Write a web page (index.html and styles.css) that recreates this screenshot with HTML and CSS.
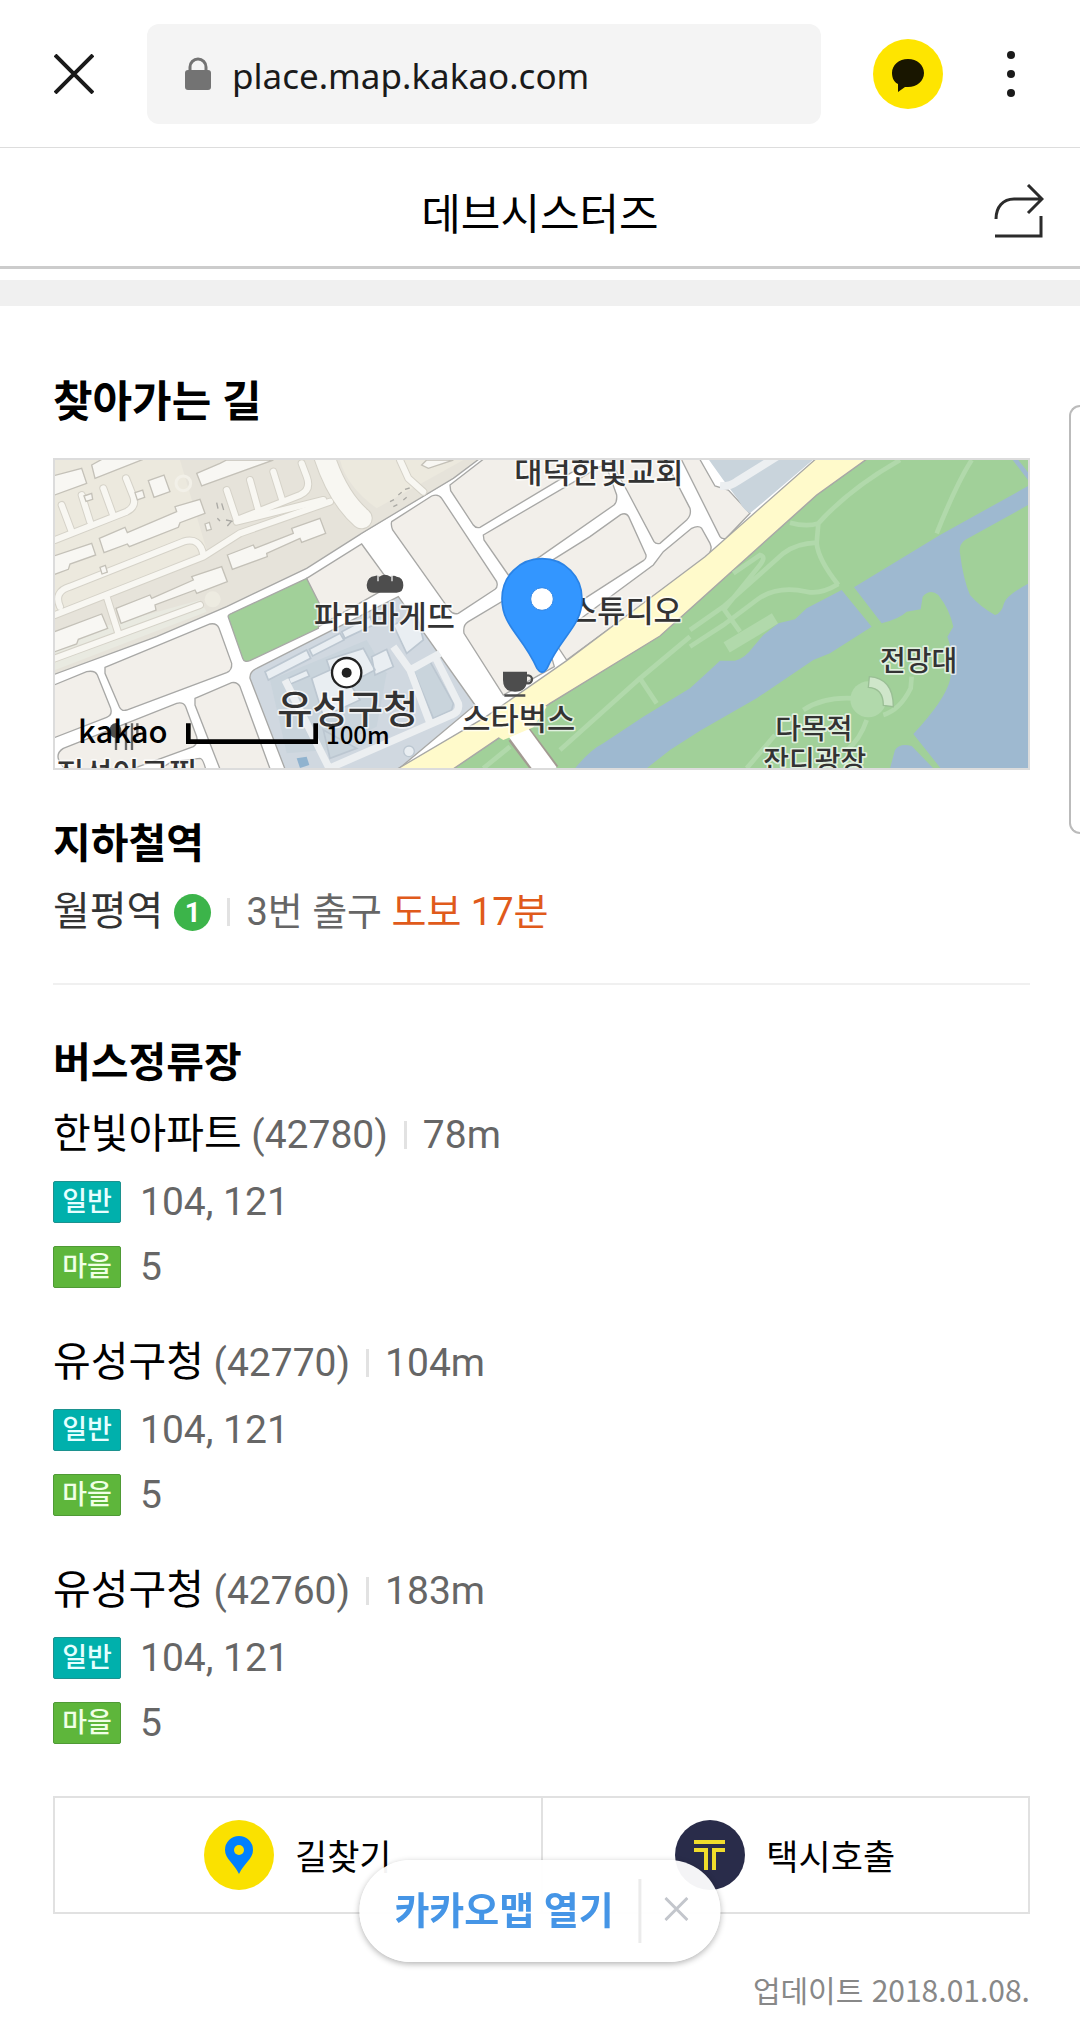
FILE: index.html
```html
<!DOCTYPE html>
<html lang="ko">
<head>
    <meta charset="UTF-8">
    <meta name="viewport" content="width=device-width, initial-scale=1.0">
    <title>데브시스터즈</title>
    <link rel="stylesheet" href="styles.css">
</head>
<body>
    <!-- Browser bar -->
    <div class="browser-bar">
        <button class="icon-button close-button" aria-label="닫기">
            <svg width="40" height="40" viewBox="0 0 40 40"><path d="M1 1L39 39M39 1L1 39" fill="none" stroke="#1a1a1a" stroke-width="4"/></svg>
        </button>
        <label class="address">
            <svg width="26" height="34" viewBox="0 0 26 34"><path d="M5 14V10a8 8 0 0 1 16 0v4" fill="none" stroke="#737373" stroke-width="3"/><rect x="0" y="13" width="26" height="20" rx="3" fill="#737373"/></svg>
            <input type="text" class="address-input" value="place.map.kakao.com" aria-label="주소" readonly>
        </label>
        <button class="icon-button talk-button" aria-label="카카오톡 공유">
            <svg width="70" height="70" viewBox="0 0 70 70"><circle cx="35" cy="35" r="35" fill="#fee500"/><path d="M35 20c9 0 16 6 16 14s-7 14-16 14h-3l-7 5v-8c-4-2-6-6-6-11 0-8 7-14 16-14z" fill="#191600"/></svg>
        </button>
        <button class="icon-button more-button" aria-label="더보기">
            <svg width="10" height="48" viewBox="0 0 10 48"><g fill="#1a1a1a"><circle cx="5" cy="5" r="4"/><circle cx="5" cy="24" r="4"/><circle cx="5" cy="43" r="4"/></g></svg>
        </button>
    </div>

    <header class="place-header">
        <h1>데브시스터즈</h1>
        <button class="icon-button share-button" aria-label="공유">
            <svg width="50" height="54" viewBox="0 0 50 54"><path d="M2 35C2 23 9 15 20 15H47M34 1L48 15L34 29M1 52H47V32" fill="none" stroke="#2b2b2b" stroke-width="3"/></svg>
        </button>
    </header>
    <div class="section-gap"></div>

    <main class="content">
        <h2 class="section-title">찾아가는 길</h2>

        <div class="map">
            <svg viewBox="45 60 2919 924" preserveAspectRatio="xMidYMid slice" role="img" aria-label="지도">
                <rect x="45" y="60" width="2950" height="924" fill="#fff"/>

                <!-- Apartment complex -->
                <path class="edge" fill="#e6e3da" d="M30 708L350 590L560 500L800 385L965 280L1240 115L1340 40H30Z"/>
                <path fill="#ece9de" d="M45 60H420L500 330L45 520ZM900 60H1270L1010 205Q920 140 900 60Z"/>
                <path fill="#e9eae1" d="M45 600L480 480L500 515L45 690Z"/>
                <g class="lane-edge">
                    <path class="lane-edge-wide" d="M850 40Q890 170 965 235"/>
                    <path d="M45 300L260 215Q290 200 280 170L258 115M190 145L218 222M125 165L150 245M65 195L95 275"/>
                    <path d="M560 150L590 240L780 165Q815 150 800 110L785 70M700 95L728 185M630 120L655 210M590 245L850 180"/>
                    <path d="M45 525L490 350L600 280L870 185M60 500Q40 455 90 440L430 305Q480 290 490 345M200 470L235 580M45 655L480 495"/>
                    <path d="M1080 60L1105 115L1150 155"/>
                </g>
                <g class="lane">
                    <path class="lane-wide" d="M850 40Q890 170 965 235"/>
                    <path d="M45 300L260 215Q290 200 280 170L258 115M190 145L218 222M125 165L150 245M65 195L95 275"/>
                    <path d="M560 150L590 240L780 165Q815 150 800 110L785 70M700 95L728 185M630 120L655 210M590 245L850 180"/>
                    <path d="M45 525L490 350L600 280L870 185M60 500Q40 455 90 440L430 305Q480 290 490 345M200 470L235 580M45 655L480 495"/>
                    <path d="M1080 60L1105 115L1150 155"/>
                </g>
                <g class="building">
                    <path d="M30 110L125 85L140 130L30 170ZM155 75L200 50H330L165 115ZM325 122L372 105L390 155L342 172ZM470 100L540 70L560 60H700L485 138Z"/>
                    <path d="M178 295L255 262L262 278L410 215L405 200L480 178L495 220L420 248L415 262L268 320L262 312L192 338Z"/>
                    <path d="M30 352L155 310L167 345L90 372L85 388L30 408ZM180 382L196 376L202 396L186 402ZM495 252L508 247L514 268L500 272ZM285 158L308 150L314 172L292 180ZM132 168L155 160L158 178L138 184Z"/>
                    <path d="M562 345L640 315L645 325L760 280L755 265L840 235L857 280L785 307L780 295L680 340L682 350L577 388Z"/>
                    <path d="M228 505L330 465L335 475L460 420L455 410L545 380L562 425L470 460L465 450L345 495L348 510L243 550Z"/>
                    <path d="M30 580L185 522L203 565L115 598L110 612L30 640ZM1145 75L1160 60H1240L1165 85Z"/>
                </g>
                <g class="dash">
                    <path d="M530 188l4 18M545 190l6 20M532 235l8 8M558 240l20 4M562 258l12-14M1050 185l12-6M1075 165l10-8M1095 148l14-4M1060 200l12-6M1090 180l10-8"/>
                </g>
                <g fill="none" stroke="#f2f0e8" stroke-width="9"><circle cx="430" cy="130" r="22"/></g>
                <circle cx="518" cy="478" r="24" fill="#edebe1"/>
                <!-- Street between the complex and the blocks -->
                <path d="M965 292L1255 118" fill="none" stroke="#fff" stroke-width="14"/>

                <!-- City blocks, west -->
                <g class="block edge">
                    <path d="M800 415L965 312L1035 408Q1050 440 1020 455L835 560Z"/>
                    <path d="M195 682L510 552Q530 548 537 565L575 670Q577 690 560 698L260 810Q245 815 238 800L195 700Z"/>
                    <path d="M30 740L140 695Q165 690 172 705L212 805Q218 825 200 832L30 898Z"/>
                    <path d="M70 925L410 790Q430 785 437 800L470 890Q475 910 460 920L240 1000H90Q30 950 70 925Z"/>
                    <path d="M465 775L575 728Q592 725 600 740L695 1000H545L465 795Z"/>
                    <path d="M340 1000L395 965L480 955Q490 955 500 1000Z"/>
                </g>
                <path class="edge" fill="#a1d099" d="M565 532Q562 525 575 520L800 415L838 490L835 565L630 662Q612 668 608 655Z"/>

                <!-- District office grounds -->
                <path class="edge" fill="#d0d8e0" d="M650 685L1075 470L1305 795L1060 1000H740L630 715Q628 695 650 685Z"/>
                <path fill="#c9d4dc" d="M690 720L980 600L1040 700L1010 860L860 930L740 940Z"/>
                <g fill="#e9eef2" stroke="#bcc7d1" stroke-width="5">
                    <path d="M675 695L800 630L812 655L685 720ZM808 628L900 580L912 600L818 648ZM905 575L990 530L1000 555L915 595ZM745 715L800 690L808 708L752 732Z"/>
                    <path d="M860 660L970 625L1005 690L930 730L960 780L850 830L815 715L870 690ZM995 650L1040 628L1060 680L1005 705ZM1060 555L1130 520L1150 600L1100 640Z"/>
                    <path fill="#c9d4dc" d="M1120 690L1170 665L1240 790L1235 810L1180 835ZM850 870L950 925L870 955Z"/>
                </g>
                <g fill="none" stroke="#eceff1" stroke-width="22">
                    <path d="M735 720L870 990M1060 620L1110 690L1200 640M1185 650L1255 790Q1260 815 1235 825L870 984M1110 690L1170 850"/>
                </g>
                <circle cx="1107" cy="934" r="16" fill="#e9eef2" stroke="#bcc7d1" stroke-width="4"/>
                <path fill="#90b3cf" d="M770 955L800 950L808 975L780 984Z"/>

                <!-- City blocks, east -->
                <g class="block edge" transform="translate(990 0)">
                    <path d="M65 245L185 168Q205 160 215 175L380 425Q385 440 375 448L265 520Q250 525 240 512L68 270Q62 255 65 245Z"/>
                    <path d="M240 135L350 50H690L600 100L330 262Q318 266 310 255L242 152Z"/>
                    <path d="M340 285L690 80Q705 75 715 95L740 165Q742 185 732 195L510 350L415 405L342 300Z"/>
                    <path d="M295 545L420 470L530 600L553 680L400 765L282 580Q278 555 295 545Z"/>
                    <path d="M420 440L660 290L752 224Q768 216 776 230L828 345Q830 355 820 362L640 478L480 560Z"/>
                    <path d="M550 600L640 530L850 375L880 335L965 265Q985 255 995 265L1020 310Q1030 330 1010 350L590 660Z"/>
                    <path d="M715 50L770 150L852 305Q858 313 870 310L950 240Q965 225 960 205L880 50Z"/>
                </g>
                <g transform="translate(1980 0)">
                    <path class="block edge" d="M-60 50L-5 50L45 138L85 150L150 220L78 295Q65 298 60 290Z"/>
                    <path fill="#c9d4dc" d="M20 50H350L150 220Q130 210 115 180L70 120Z"/>
                    <path d="M60 138Q90 140 110 125L230 50" fill="none" stroke="#eceff1" stroke-width="24"/>
                </g>

                <!-- Park, main road and river -->
                <g transform="translate(990 0)">
                    <path class="edge" fill="#a1d099" d="M230 1000L540 790L870 585L990 480L1340 165L1500 50H1990V1000Z"/>
                    <path class="edge" fill="#fffacb" d="M60 1000L345 832L590 662L1005 350L1345 50H1500L1340 165L990 480L870 588L540 790L230 1000Z"/>
                    <path fill="#9eb9d0" d="M615 985Q660 930 700 910L820 830L960 745L1020 690L1050 662H1095Q1125 655 1150 620L1180 585L1225 550L1275 538L1310 505L1415 450L1505 560L1380 640L1330 660L1160 775L990 872L900 930L830 985Z"/>
                    <path d="M445 880L535 1000" fill="none" stroke="#a39a92" stroke-width="74"/>
                    <path d="M425 850L535 1000" fill="none" stroke="#fff" stroke-width="62"/>
                    <path fill="#fffacb" d="M350 870L510 780L530 800L490 862L400 900Z"/>
                </g>
                <g transform="translate(1980 0)">
                    <path fill="#9eb9d0" d="M462 442L720 285L990 135V192L795 300Q775 315 780 340Q790 420 810 465Q840 500 885 525Q905 520 912 490Q920 465 990 428V985H722L640 882Q735 780 750 720Q765 650 742 590L760 560Q750 510 715 465Q690 445 668 470L662 508L620 515Q600 535 545 550Z"/>
                    <path fill="#9eb9d0" d="M570 985L585 930Q600 908 635 918L700 985ZM938 60H955L990 104V128Z"/>
                    <g class="trail">
                        <path d="M600 60Q450 145 355 250Q320 262 270 248M355 250L350 310Q355 360 415 435M350 308Q290 310 250 340L70 500L-30 570M415 432Q360 465 320 455Q230 435 170 480L70 555L-30 620M70 505L120 575M100 400L180 345Q200 350 180 375L75 505"/>
                        <path d="M815 60Q770 130 710 280"/>
                        <path class="trail-wide" d="M80 622L225 535"/>
                        <path d="M310 810Q370 770 460 775M500 840Q480 900 440 930M635 710L632 745Q600 810 550 825M225 885L140 985"/>
                        <path d="M-30 590L-180 715L-420 930M-180 715L-130 790M-570 920L-650 985"/>
                    </g>
                    <circle cx="505" cy="778" r="54" fill="#b1d9ab"/>
                    <path d="M508 710Q580 715 580 800L550 796Q550 745 505 742Z" fill="#cfe6ca" stroke="#9abf95" stroke-width="4"/>
                </g>

                <!-- Place labels -->
                <g class="map-label">
                    <text x="1423" y="129">대덕한빛교회</text>
                    <text x="822" y="563">파리바게뜨</text>
                    <text x="1587" y="547">스튜디오</text>
                    <text x="1267" y="870">스타벅스</text>
                    <text x="48" y="1034">진성아구찜</text>
                    <text x="712" y="850" class="map-label-large">유성구청</text>
                    <text x="2520" y="694" class="map-label-small">전망대</text>
                    <text x="2206" y="898" class="map-label-small">다목적</text>
                    <text x="2170" y="994" class="map-label-small">잔디광장</text>
                </g>
                <circle cx="920" cy="698" r="44" fill="#fff" stroke="#222" stroke-width="7"/>
                <circle cx="920" cy="698" r="15" fill="#222"/>
                <path fill="#4d4d4d" d="M980 435Q982 410 1005 408Q1012 404 1018 410Q1034 398 1052 410Q1062 404 1070 410Q1090 412 1090 436Q1090 458 1070 458H1000Q980 458 980 435Z"/>
                <path d="M1014 404V424M1056 404V424" stroke="#eee" stroke-width="4"/>
                <path fill="#4d4d4d" d="M1389 695H1461V720Q1461 755 1425 755Q1389 755 1389 720ZM1393 763H1456V770H1393Z"/>
                <circle cx="1464" cy="718" r="12" fill="none" stroke="#4d4d4d" stroke-width="7"/>
                <path d="M228 850V930M258 850V930M276 850V930M292 850V890" stroke="#666" stroke-width="7"/>
                <ellipse cx="226" cy="872" rx="18" ry="22" fill="#4d4d4d"/>

                <!-- Marker -->
                <g transform="translate(990 0)">
                    <path d="M516 356C584 356 636 409 636 476C636 560 575 585 531 685Q516 708 501 685C457 585 396 560 396 476C396 409 448 356 516 356Z" fill="#3396ff" stroke="#2a83e6" stroke-width="5"/>
                    <circle cx="516" cy="477" r="34" fill="#fff" stroke="#2a83e6" stroke-width="3"/>
                </g>

                <!-- Scale -->
                <text x="114" y="910" class="map-logo">kakao</text>
                <path d="M445 850V905H827V850" fill="none" stroke="#000" stroke-width="14"/>
                <text x="858" y="912" class="map-scale">100m</text>
            </svg>
        </div>

        <section class="subway">
            <h3 class="sub-title">지하철역</h3>
            <p class="subway-info">
                <span class="station">월평역</span>
                <span class="line-number">1</span>
                <span class="bar"></span>
                <span>3번 출구 <em class="walk">도보 17분</em></span>
            </p>
        </section>

        <section class="bus">
            <h3 class="sub-title">버스정류장</h3>
            <ul class="stop-list">
                <li class="stop">
                    <p class="stop-info"><span><strong class="stop-name">한빛아파트</strong> (42780)</span><span class="bar"></span><span>78m</span></p>
                    <p class="route"><span class="badge badge-city">일반</span>104, 121</p>
                    <p class="route"><span class="badge badge-village">마을</span>5</p>
                </li>
                <li class="stop">
                    <p class="stop-info"><span><strong class="stop-name">유성구청</strong> (42770)</span><span class="bar"></span><span>104m</span></p>
                    <p class="route"><span class="badge badge-city">일반</span>104, 121</p>
                    <p class="route"><span class="badge badge-village">마을</span>5</p>
                </li>
                <li class="stop">
                    <p class="stop-info"><span><strong class="stop-name">유성구청</strong> (42760)</span><span class="bar"></span><span>183m</span></p>
                    <p class="route"><span class="badge badge-city">일반</span>104, 121</p>
                    <p class="route"><span class="badge badge-village">마을</span>5</p>
                </li>
            </ul>
        </section>

        <div class="actions">
            <a href="#" class="action">
                <svg width="70" height="70" viewBox="0 0 70 70"><circle cx="35" cy="35" r="35" fill="#fae100"/><path d="M35 16a14 14 0 0 1 14 14c0 9-9 13-14 24c-5-11-14-15-14-24a14 14 0 0 1 14-14z" fill="#0080ff"/><circle cx="35" cy="30" r="5" fill="#fae100"/></svg>
                길찾기
            </a>
            <a href="#" class="action">
                <svg width="70" height="70" viewBox="0 0 70 70"><circle cx="35" cy="35" r="35" fill="#292c4a"/><path d="M19 22H50M19 30H31V50M50 30H39V50" fill="none" stroke="#f0dc2b" stroke-width="4"/></svg>
                택시호출
            </a>
        </div>

        <p class="updated">업데이트 2018.01.08.</p>
    </main>

    <!-- Floating app banner -->
    <div class="app-banner">
        <a href="#" class="app-link">카카오맵 열기</a>
        <button class="icon-button banner-close" aria-label="배너 닫기">
            <svg width="24" height="24" viewBox="0 0 24 24"><path d="M1 1L23 23M23 1L1 23" fill="none" stroke="#c3c6cc" stroke-width="3"/></svg>
        </button>
    </div>
    <div class="edge-handle"></div>
</body>
</html>
```

FILE: styles.css
```css
* {
    box-sizing: border-box;
}

body {
    position: relative;
    margin: 0;
    background-color: #fff;
    color: #000;
    font-family: Roboto, "Noto Sans CJK KR", sans-serif;
    font-size: 38px;
    line-height: 60px;
}

h1, h2, h3, p, ul {
    margin: 0;
    padding: 0;
}

ul {
    list-style: none;
}

a {
    color: inherit;
    text-decoration: none;
}

svg {
    display: block;
    flex: none;
}

.icon-button {
    flex: none;
    padding: 0;
    border: none;
    background: none;
    cursor: pointer;
}

/* Browser bar */
.browser-bar {
    display: flex;
    align-items: center;
    height: 148px;
    padding: 0 64px 0 54px;
    border-bottom: 1px solid #ddd;
}

.address {
    display: flex;
    flex: 1;
    align-items: center;
    gap: 21px;
    height: 100px;
    margin: 0 52px 0 53px;
    padding: 0 38px;
    border-radius: 12px;
    background-color: #f4f4f4;
}

.address-input {
    flex: 1;
    min-width: 0;
    padding: 4px 0 0;
    border: none;
    outline: none;
    background: none;
    color: #1a1a1a;
    font-family: "Noto Sans", sans-serif;
    font-size: 35px;
}

.more-button {
    margin-left: 63px;
}

/* Place header */
.place-header {
    display: grid;
    grid-template-columns: 1fr auto 1fr;
    align-items: center;
    height: 121px;
    padding: 8px 36px 0;
    border-bottom: 3px solid #ccc;
}

.place-header h1 {
    grid-column: 2;
    font-family: "Noto Sans CJK KR", sans-serif;
    font-size: 43px;
    font-weight: 400;
}

.share-button {
    justify-self: end;
}

.section-gap {
    height: 26px;
    margin-top: 11px;
    background-color: #f0f0f0;
}

.content {
    padding: 66px 50px 18px 53px;
}

.section-title {
    margin-bottom: 26px;
    font-size: 43px;
    font-weight: 700;
}

.sub-title {
    font-size: 41px;
    font-weight: 700;
}

/* Map */
.map {
    border: 2px solid #dcdcdc;
}

.map svg {
    width: 100%;
    height: 308px;
}

.edge {
    stroke: #a8a8a6;
    stroke-width: 4;
}

.block {
    fill: #f2efea;
}

.lane, .lane-edge {
    fill: none;
    stroke: #f8f7f2;
    stroke-width: 18;
    stroke-linecap: round;
}

.lane-edge {
    stroke: #d5d2c8;
    stroke-width: 24;
}

.lane-wide {
    stroke-width: 60;
}

.lane-edge-wide {
    stroke-width: 66;
}

.building {
    fill: #f8f7f3;
    stroke: #c4c1b8;
    stroke-width: 4;
}

.dash {
    fill: none;
    stroke: #aaa9a4;
    stroke-width: 4;
}

.trail {
    fill: none;
    stroke: #b1d9ab;
    stroke-width: 14;
}

.trail-wide {
    stroke-width: 36;
}

.map-label {
    fill: #333;
    stroke: #fff;
    stroke-opacity: 0.7;
    stroke-width: 10;
    stroke-linejoin: round;
    paint-order: stroke;
    font-family: "Noto Sans CJK KR", sans-serif;
    font-size: 92px;
    font-weight: 500;
}

.map-label-large {
    font-size: 115px;
}

.map-label-small {
    font-size: 84px;
}

.map-logo {
    font-family: "Noto Sans CJK KR", sans-serif;
    font-size: 93px;
    font-weight: 500;
}

.map-scale {
    font-family: "Noto Sans CJK KR", sans-serif;
    font-size: 72px;
    font-weight: 500;
}

/* Subway */
.subway {
    padding: 44px 0 41px;
    border-bottom: 2px solid #f0f0f0;
}

.subway-info {
    display: flex;
    align-items: center;
    margin-top: 8px;
    color: #666;
}

.station {
    color: #333;
    font-size: 40px;
}

.line-number {
    width: 37px;
    height: 37px;
    margin-left: 11px;
    border-radius: 50%;
    background-color: #3cb44a;
    color: #fff;
    font-size: 28px;
    font-weight: 700;
    line-height: 37px;
    text-align: center;
}

.bar {
    width: 3px;
    height: 28px;
    margin: 0 16px;
    background-color: #e2e2e2;
}

.walk {
    color: #e05a1b;
    font-style: normal;
}

/* Bus stops */
.bus {
    padding-top: 48px;
}

.stop-list {
    display: flex;
    flex-direction: column;
    gap: 45px;
    margin-top: 12px;
}

.stop-info {
    display: flex;
    align-items: center;
    margin-bottom: 16px;
    color: #666;
    font-size: 39px;
}

.stop-name {
    color: #000;
    font-size: 41px;
    font-weight: 400;
    line-height: 1;
}

.route {
    display: flex;
    align-items: center;
    gap: 19px;
    color: #666;
    font-size: 39px;
    line-height: 42px;
}

.route + .route {
    margin-top: 23px;
}

.badge {
    width: 68px;
    border: 1px solid #1c928f;
    border-radius: 2px;
    background-color: #00b0ac;
    color: #e6ffff;
    font-size: 27px;
    font-weight: 500;
    line-height: 40px;
    text-align: center;
}

.badge-village {
    border-color: #4f9a35;
    background-color: #5eb63b;
    color: #f0ffe6;
}

/* Buttons */
.actions {
    display: flex;
    margin-top: 52px;
    border: 2px solid #e1e1e1;
}

.action {
    display: flex;
    flex: 1;
    align-items: center;
    justify-content: center;
    gap: 21px;
    height: 114px;
    font-family: "Noto Sans CJK KR", sans-serif;
    font-size: 35px;
}

.action + .action {
    border-left: 2px solid #e1e1e1;
}

.updated {
    margin-top: 53px;
    color: #888;
    font-family: "Noto Sans CJK KR", sans-serif;
    font-size: 30px;
    line-height: 44px;
    text-align: right;
}

/* Floating banner */
.app-banner {
    position: fixed;
    bottom: 70px;
    left: 50%;
    display: flex;
    align-items: center;
    height: 102px;
    padding-left: 35px;
    border-radius: 51px;
    background-color: rgba(255, 255, 255, 0.95);
    box-shadow: 0 2px 6px rgba(0, 0, 0, 0.3);
    transform: translateX(-50%);
}

.app-link {
    padding-right: 25px;
    border-right: 3px solid #ebebeb;
    color: #4595e6;
    font-size: 38px;
    font-weight: 700;
    line-height: 64px;
    white-space: nowrap;
}

.banner-close {
    padding: 20px 32px 24px 23px;
}

/* Side panel handle on the screen edge */
.edge-handle {
    position: absolute;
    top: 405px;
    right: 0;
    width: 11px;
    height: 429px;
    border: 2px solid #bbb;
    border-right: none;
    border-radius: 16px 0 0 16px;
    background-color: #fff;
}
```
